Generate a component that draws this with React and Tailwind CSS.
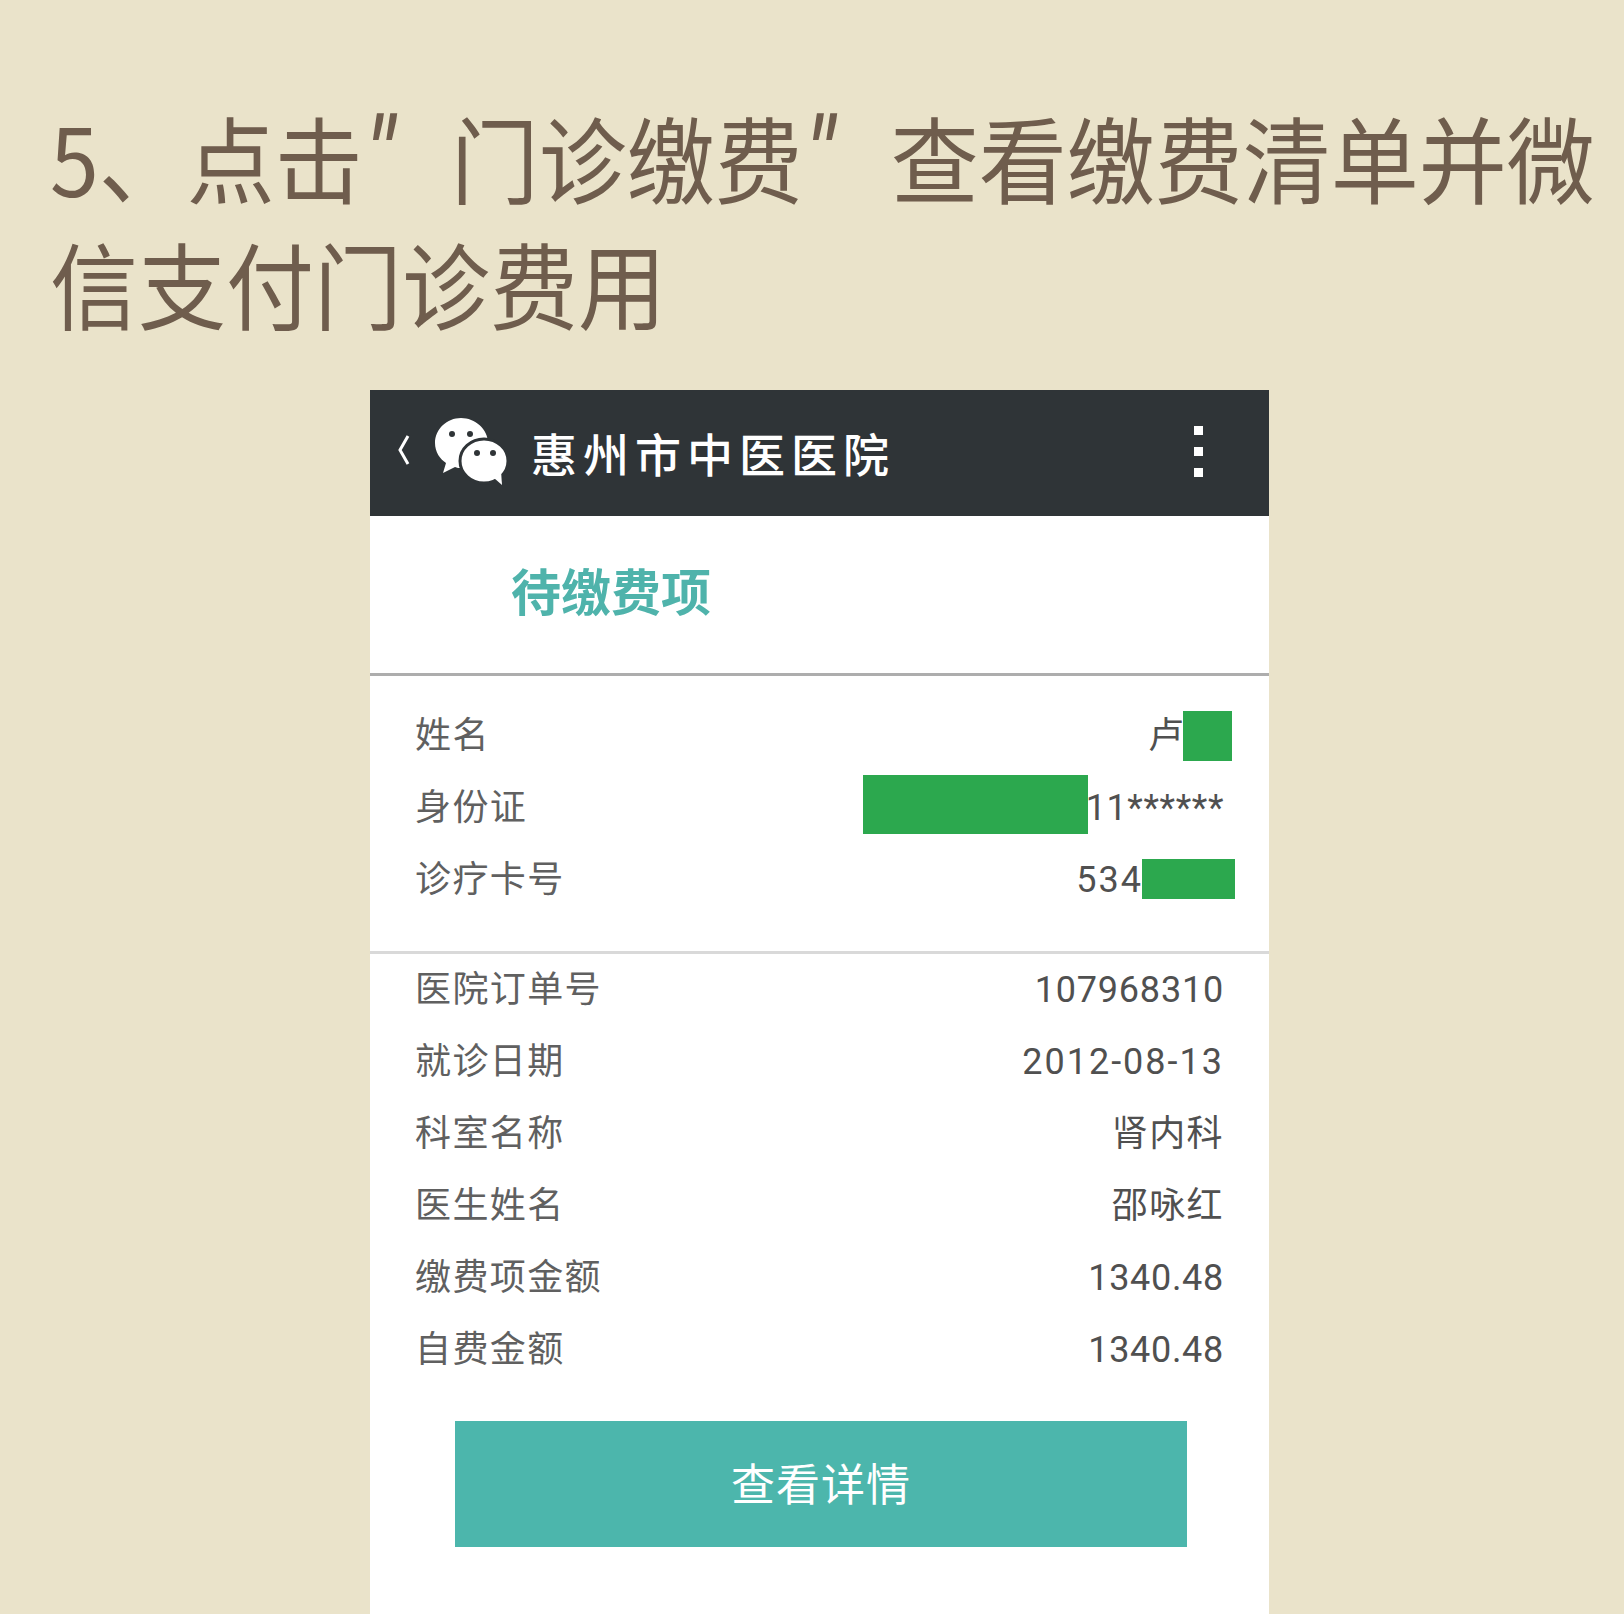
function WeChatIcon() {
  return (
    <svg width="76" height="70" viewBox="0 0 76 70" className="shrink-0">
      <path d="M27 2C13 2 1 13 1 27c0 9 5 16 11 20l-3 10 12-6c2 1 4 1 6 1 14 0 27-11 27-25S41 2 27 2z" fill="#fff" />
      <ellipse cx="50" cy="45" rx="24" ry="22" fill="#fff" stroke="#2f3437" strokeWidth="3" />
      <path d="M60 62l8 7-1-14z" fill="#fff" />
      <circle cx="18" cy="18" r="3" fill="#2f3437" />
      <circle cx="36" cy="18" r="3" fill="#2f3437" />
      <circle cx="43" cy="37" r="3" fill="#2f3437" />
      <circle cx="59" cy="37" r="3" fill="#2f3437" />
    </svg>
  )
}

function Quote() {
  return <span className="inline-block w-[88px] text-[104px] leading-[60px] italic font-['Roboto',sans-serif]">"</span>
}

function Row({ label, value, tracking = 'tracking-[1px]', children }) {
  return (
    <div className="flex items-center justify-between h-[72px] pl-[45px] pr-[45px]">
      <span className="text-[36px] tracking-[1.4px] text-[#606060]">{label}</span>
      {children || <span className={`text-[36px] text-[#505050] ${tracking}`}>{value}</span>}
    </div>
  )
}

const orderRows = [
  ['医院订单号', '107968310', 'tracking-[0.8px]'],
  ['就诊日期', '2012-08-13', 'tracking-[2px]'],
  ['科室名称', '肾内科', 'tracking-[1.4px]'],
  ['医生姓名', '邵咏红', 'tracking-[1.4px]'],
  ['缴费项金额', '1340.48', 'tracking-[0.7px]'],
  ['自费金额', '1340.48', 'tracking-[0.7px]'],
]

export default function App() {
  return (
    <div className="h-[1614px] overflow-hidden bg-[#eae3ca] flex flex-col font-['Roboto','Noto_Sans_CJK_SC',sans-serif]">
      <div className="h-[390px] shrink-0">
        <h1 className="pt-[87px] pl-[50px] pr-[20px] text-[88px] leading-[118px] font-normal text-[#6f5d4d] font-['Noto_Sans_CJK_SC',sans-serif] scale-y-[1.07] origin-top">
          5、点击<Quote />门诊缴费<Quote />查看缴费清单并微<br />信支付门诊费用
        </h1>
      </div>

      <div className="w-[899px] ml-[370px] flex-1 bg-white flex flex-col">
        <header className="h-[126px] bg-[#2f3437] flex items-center pl-[27px] pr-[66px] shrink-0">
          <svg width="14" height="32" viewBox="0 0 14 32" className="shrink-0 mt-[-6px]">
            <path d="M11 2 3 16l8 14" fill="none" stroke="#fff" strokeWidth="3" />
          </svg>
          <div className="ml-[23px] mt-[-4px]"><WeChatIcon /></div>
          <span className="ml-[21px] mt-[6px] text-[46px] leading-none tracking-[6px] font-medium text-white">惠州市中医医院</span>
          <div className="ml-auto flex flex-col gap-[12px] mt-[-4px]">
            <span className="w-[9px] h-[9px] bg-white" />
            <span className="w-[9px] h-[9px] bg-white" />
            <span className="w-[9px] h-[9px] bg-white" />
          </div>
        </header>

        <div className="h-[160px] flex items-center pl-[141px] border-b-[3px] border-[#adadad] shrink-0">
          <span className="text-[50px] leading-none font-bold text-[#4fb3ab] mt-[-2px]">待缴费项</span>
        </div>

        <div className="pt-[24px] h-[278px] border-b-[3px] border-[#d9d9d9] shrink-0">
          <Row label="姓名">
            <div className="relative text-[36px] text-[#505050] mr-[40px]">
              卢
              <span className="absolute left-[35px] top-[2px] w-[49px] h-[50px] bg-[#2ca84e]" />
            </div>
          </Row>
          <Row label="身份证">
            <div className="relative text-[36px] tracking-[0.6px] text-[#505050]">
              11******
              <span className="absolute right-[136px] top-[-6px] w-[225px] h-[59px] bg-[#2ca84e]" />
            </div>
          </Row>
          <Row label="诊疗卡号">
            <div className="relative text-[36px] tracking-[2px] text-[#505050] mr-[81px]">
              534
              <span className="absolute left-[66px] top-[6px] w-[93px] h-[40px] bg-[#2ca84e]" />
            </div>
          </Row>
        </div>

        {orderRows.map(([label, value, tracking]) => (
          <Row key={label} label={label} value={value} tracking={tracking} />
        ))}

        <button className="mt-[35px] ml-[85px] w-[732px] h-[126px] pt-[3px] bg-[#4cb6ac] text-white text-[44px] tracking-[1px] shrink-0">
          查看详情
        </button>
      </div>
    </div>
  )
}
